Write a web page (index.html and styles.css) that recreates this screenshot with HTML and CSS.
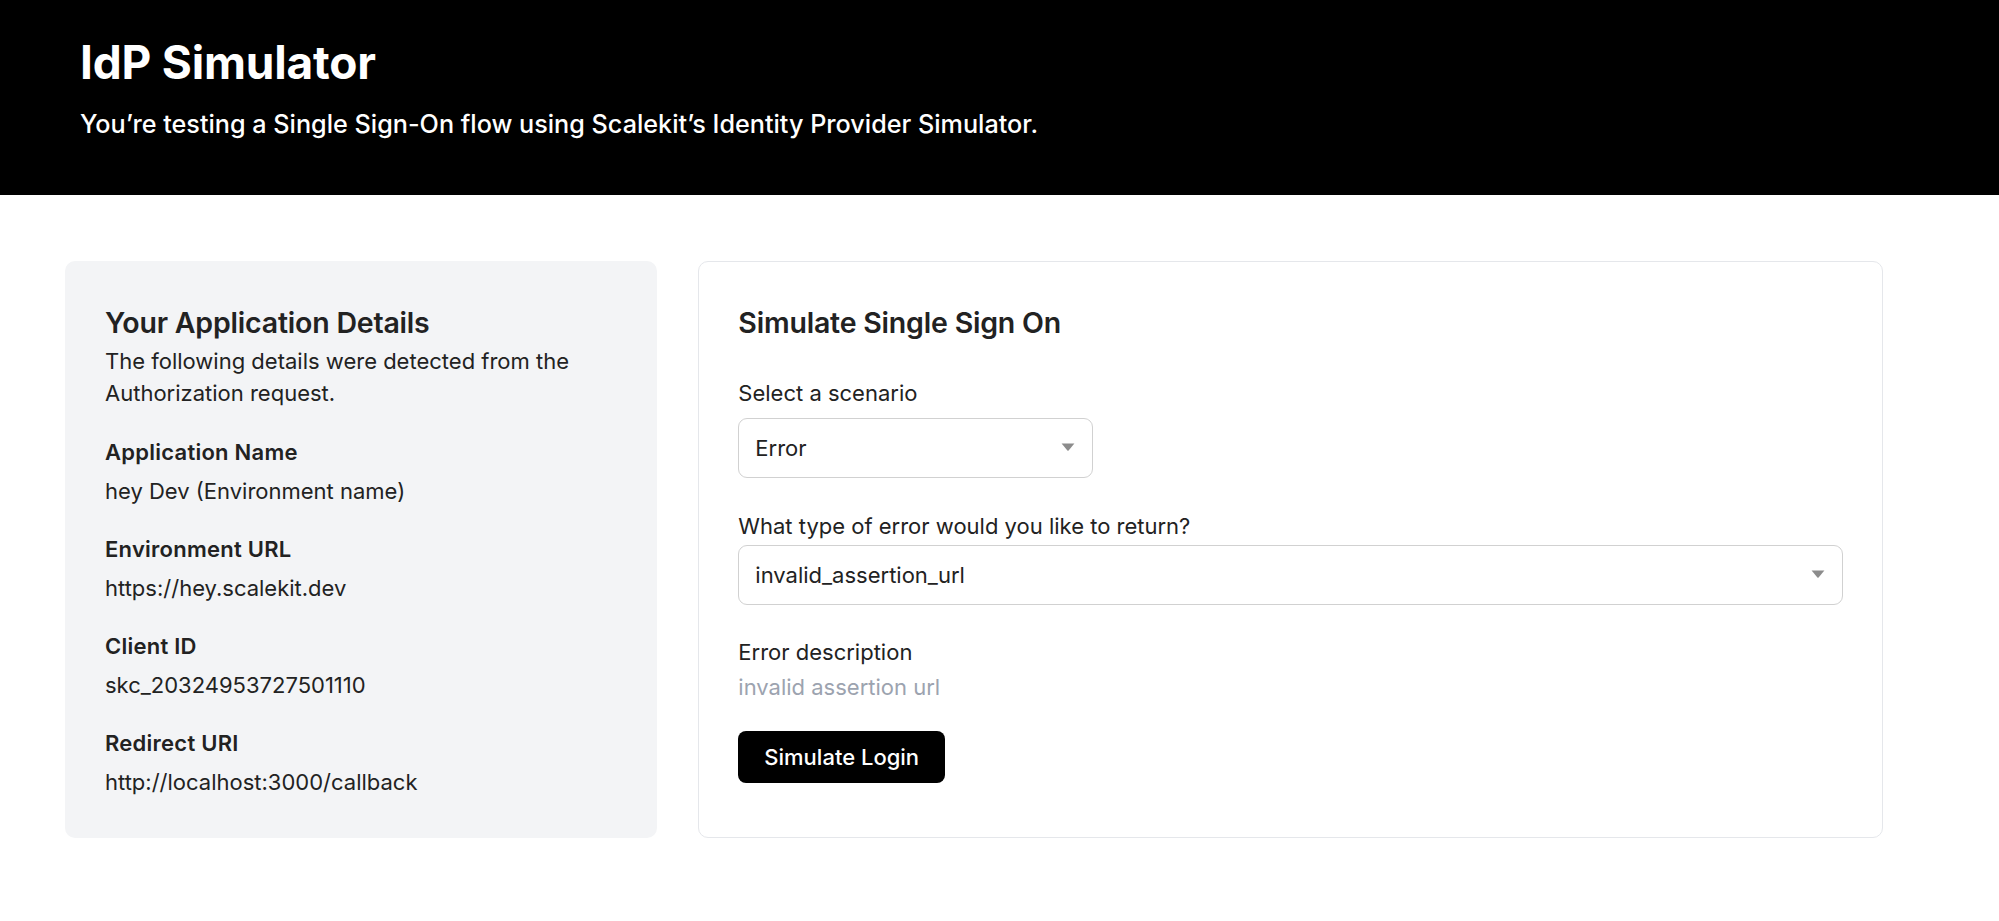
FILE: index.html
```html
<!DOCTYPE html>
<html lang="en">
<head>
<meta charset="utf-8">
<title>IdP Simulator</title>
<link rel="stylesheet" href="styles.css">
</head>
<body>
<header class="hero">
  <h1 class="hero-title">IdP Simulator</h1>
  <p class="hero-sub">You’re testing a Single Sign-On flow using Scalekit’s Identity Provider Simulator.</p>
</header>
<main class="main">
  <section class="card card-info">
    <h2 class="card-title">Your Application Details</h2>
    <p class="intro">The following details were detected from the Authorization request.</p>
    <dl class="details">
      <div class="detail">
        <dt class="detail-label">Application Name</dt>
        <dd class="detail-value">hey Dev (Environment name)</dd>
      </div>
      <div class="detail">
        <dt class="detail-label">Environment URL</dt>
        <dd class="detail-value">https://hey.scalekit.dev</dd>
      </div>
      <div class="detail">
        <dt class="detail-label">Client ID</dt>
        <dd class="detail-value">skc_20324953727501110</dd>
      </div>
      <div class="detail">
        <dt class="detail-label">Redirect URI</dt>
        <dd class="detail-value">http://localhost:3000/callback</dd>
      </div>
    </dl>
  </section>
  <section class="card card-form">
    <h2 class="card-title">Simulate Single Sign On</h2>
    <div class="field field-scenario">
      <div class="field-label">Select a scenario</div>
      <div class="select select-small">
        <span>Error</span>
        <svg class="caret" width="14" height="8" viewBox="0 0 14 8"><path d="M0.6 0.4 L13.4 0.4 L7.6 7.4 Q7 8 6.4 7.4 Z" fill="#8c8c8c"/></svg>
      </div>
    </div>
    <div class="field field-error">
      <div class="field-label">What type of error would you like to return?</div>
      <div class="select select-wide">
        <span>invalid_assertion_url</span>
        <svg class="caret" width="14" height="8" viewBox="0 0 14 8"><path d="M0.6 0.4 L13.4 0.4 L7.6 7.4 Q7 8 6.4 7.4 Z" fill="#8c8c8c"/></svg>
      </div>
    </div>
    <div class="field field-desc">
      <div class="field-label">Error description</div>
      <div class="desc-value">invalid assertion url</div>
    </div>
    <button class="btn" type="button">Simulate Login</button>
  </section>
</main>
</body>
</html>
```

FILE: styles.css
```css
* { box-sizing: border-box; }

html, body {
  margin: 0;
  padding: 0;
  background: #ffffff;
  font-family: "Inter", "Noto Sans", sans-serif;
  color: #222222;
}

.hero {
  background: #000000;
  color: #ffffff;
  padding: 37px 80px 53px 80px;
}

.hero-title {
  margin: 0;
  font-size: 46px;
  line-height: 50px;
  font-weight: 700;
  letter-spacing: -0.2px;
}

.hero-sub {
  margin: 20px 0 0 0;
  font-size: 25.2px;
  line-height: 35px;
  font-weight: 500;
}

.main {
  display: grid;
  grid-template-columns: 1fr 2fr;
  gap: 41px;
  padding: 66px 116px 40px 65px;
  align-items: stretch;
}

.card {
  border-radius: 10px;
}

.card-info {
  background: #f3f4f6;
  padding: 42px 40px 41px 40px;
}

.card-form {
  background: #ffffff;
  border: 1px solid #e5e7eb;
  padding: 41px 39px 40px 39px;
  display: flex;
  flex-direction: column;
  align-items: flex-start;
}

.card-title {
  margin: 0;
  font-size: 28.5px;
  line-height: 40px;
  font-weight: 600;
  color: #222222;
  letter-spacing: -0.2px;
}

.intro {
  margin: 2px 0 0 0;
  font-size: 22px;
  line-height: 32px;
}

.details {
  margin: 28px 0 0 0;
  display: flex;
  flex-direction: column;
  gap: 28px;
}

.detail-label {
  font-size: 22px;
  line-height: 30px;
  font-weight: 600;
  letter-spacing: 0.25px;
}

.detail-value {
  margin: 9px 0 0 0;
  font-size: 22px;
  line-height: 30px;
}

.field {
  align-self: stretch;
  display: flex;
  flex-direction: column;
  align-items: flex-start;
}

.field-label {
  font-size: 22px;
  line-height: 30px;
}

.field-scenario { margin-top: 35px; gap: 10px; }
.field-error { margin-top: 33px; gap: 4px; }
.field-desc { margin-top: 32px; gap: 5px; }

.select {
  height: 60px;
  border: 1px solid #d1d1d1;
  border-radius: 9px;
  background: #ffffff;
  display: flex;
  align-items: center;
  justify-content: space-between;
  padding: 0 17px 0 16px;
  font-size: 22px;
  color: #222222;
}

.select-small { width: 355px; }
.select-wide { align-self: stretch; }

.caret {
  display: block;
  margin-top: -2px;
}

.desc-value {
  font-size: 22px;
  line-height: 30px;
  color: #9ca3af;
}

.btn {
  margin-top: 29px;
  height: 52px;
  padding: 0 26px;
  border: none;
  border-radius: 8px;
  background: #000000;
  color: #ffffff;
  font-family: "Inter", "Noto Sans", sans-serif;
  font-size: 22px;
  font-weight: 500;
}
```
